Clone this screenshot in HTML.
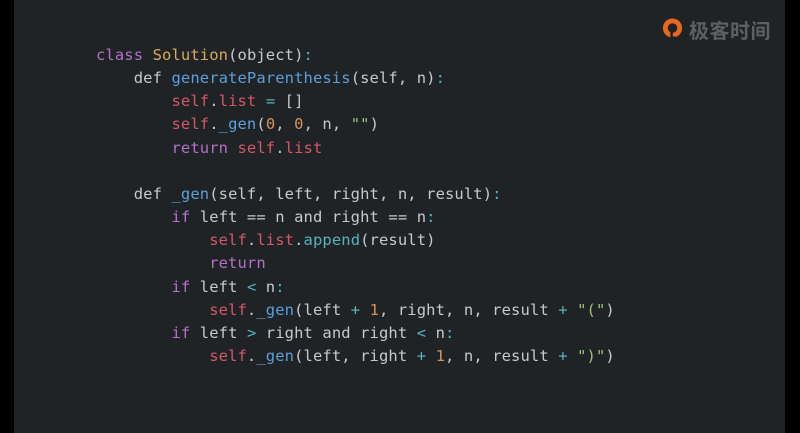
<!DOCTYPE html>
<html><head><meta charset="utf-8"><style>
html,body{margin:0;padding:0;width:800px;height:433px;background:#000;overflow:hidden}
#s{position:absolute;left:14px;top:0;width:771px;height:433px;background:#1f2326}
pre{position:absolute;left:96px;top:44px;margin:0;font-family:"DejaVu Sans Mono","Liberation Mono",monospace;font-size:15.5px;line-height:23.15px;color:#c5c9cc;letter-spacing:0.1px}
.k{color:#b46fc8}.c{color:#d9a95e}.f{color:#5c9fd9}.s{color:#d4576a}.n{color:#d4935a}.o{color:#56b3bf}.g{color:#98c379}
#logo{position:absolute;left:661px;top:17px;width:23px;height:24px}
#lt{position:absolute;left:689px;top:17px;font-family:"Noto Sans CJK SC",sans-serif;font-size:20px;font-weight:bold;color:#5d6063;line-height:26px;letter-spacing:0.5px}
</style></head><body><div id="s"></div>
<svg id="logo" viewBox="0 0 24 24"><circle cx="12" cy="11" r="10" fill="#e9671f"/><circle cx="12" cy="11" r="5" fill="#1f2326"/><path d="M11 11v10h4" stroke="#1f2326" stroke-width="2.5" fill="none"/></svg>
<div id="lt">极客时间</div>
<pre><span class="k">class</span> <span class="c">Solution</span>(object)<span class="o">:</span>
    def <span class="f">generateParenthesis</span>(self, n)<span class="o">:</span>
        <span class="s">self</span>.<span class="s">list</span> <span class="o">=</span> []
        <span class="s">self</span>.<span class="f">_gen</span>(<span class="n">0</span>, <span class="n">0</span>, n, <span class="g">""</span>)
        <span class="k">return</span> <span class="s">self</span>.<span class="s">list</span>

    def <span class="f">_gen</span>(self, left, right, n, result)<span class="o">:</span>
        <span class="k">if</span> left == n and right == n<span class="o">:</span>
            <span class="s">self</span>.<span class="s">list</span>.<span class="o">append</span>(result)
            <span class="k">return</span>
        <span class="k">if</span> left <span class="o">&lt;</span> n<span class="o">:</span>
            <span class="s">self</span>.<span class="f">_gen</span>(left <span class="o">+</span> <span class="n">1</span>, right, n, result <span class="o">+</span> <span class="g">"("</span>)
        <span class="k">if</span> left <span class="o">&gt;</span> right and right <span class="o">&lt;</span> n<span class="o">:</span>
            <span class="s">self</span>.<span class="f">_gen</span>(left, right <span class="o">+</span> <span class="n">1</span>, n, result <span class="o">+</span> <span class="g">")"</span>)</pre>
</body></html>
